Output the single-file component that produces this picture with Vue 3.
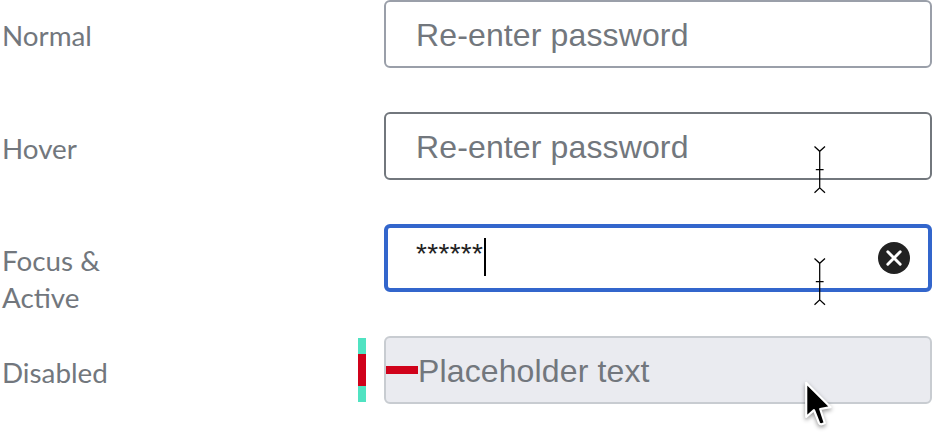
<script setup>
const rows = [
  { state: 'normal', label: ['Normal'], text: 'Re-enter password' },
  { state: 'hover', label: ['Hover'], text: 'Re-enter password', beam: true },
  { state: 'focus', label: ['Focus &', 'Active'], text: '******', beam: true },
  { state: 'disabled', label: ['Disabled'], text: 'Placeholder text' },
]
</script>

<template>
  <main class="states">
    <section v-for="row in rows" :key="row.state" class="row" :class="row.state">
      <div class="label">
        <div v-for="line in row.label" :key="line">{{ line }}</div>
      </div>
      <div class="spacer">
        <div v-if="row.state === 'disabled'" class="measure"></div>
      </div>
      <div class="field">
        <div v-if="row.state === 'disabled'" class="inset"></div>
        <span class="text">{{ row.text }}</span>
        <span v-if="row.state === 'focus'" class="caret"></span>
        <svg v-if="row.state === 'focus'" class="clear" viewBox="0 0 32 32">
          <circle cx="16" cy="16" r="16" fill="#222" />
          <path d="M9.8 9.8 22.2 22.2M22.2 9.8 9.8 22.2" stroke="#fff" stroke-width="2.9" stroke-linecap="round" />
        </svg>
        <svg v-if="row.beam" class="beam" viewBox="0 0 12 48">
          <path d="M.5 .5 5.7 5.3 11 .5M5.7 5V42M.5 46.8 5.7 41.8 11 46.8M1.8 23.5H9.6" fill="none" stroke="#000" stroke-width="1.25" />
        </svg>
        <svg v-if="row.state === 'disabled'" class="pointer" viewBox="0 0 30 50">
          <path d="M1.2 4.9V39L9 32.2 14 45Q15.5 47.6 19.8 45L15.2 31 25.6 29.2Z" fill="#000" stroke="#fff" stroke-width="2.2" stroke-linejoin="round" />
        </svg>
      </div>
    </section>
  </main>
</template>

<style>
body {
  background: #fff;
  overflow: hidden;
}
</style>

<style scoped>
.states {
  display: flex;
  flex-direction: column;
  gap: 44px;
  width: 934px;
  height: 444px;
}
.row {
  display: flex;
  flex: none;
  height: 68px;
}
.label {
  width: 340px;
  padding: 18px 0 0 2px;
  box-sizing: border-box;
  font: 27.8px/37px Lato, sans-serif;
  color: #72777d;
}
.normal .label {
  padding-top: 17px;
}
.spacer {
  width: 44px;
  padding: 2px 0 0 18px;
  box-sizing: border-box;
}
.measure {
  width: 8px;
  height: 64px;
  background: linear-gradient(#50e3c2 16px, #d0021b 16px 48px, #50e3c2 48px);
}
.field {
  position: relative;
  display: flex;
  align-items: center;
  width: 548px;
  height: 68px;
  box-sizing: border-box;
  padding-left: 30px;
  border: 2px solid #9a9fa9;
  border-radius: 6px;
  background: #fff;
}
.text {
  padding-top: 2px;
  font: 32px/38px "Liberation Sans", Arial, sans-serif;
  letter-spacing: 0.13px;
  color: #72777d;
  white-space: pre;
}
.hover .field {
  border-color: #72777d;
}
.focus .field {
  border: 4px solid #36c;
  padding-left: 28px;
}
.focus .text {
  padding: 0 0 8px;
  color: #222;
  font-size: 28px;
  letter-spacing: 0.32px;
}
.caret {
  width: 2px;
  height: 38px;
  margin: 0 0 2px 0.7px;
  background: #000;
}
.clear {
  width: 32px;
  height: 32px;
  margin: 0 18px 0 auto;
}
.beam {
  position: absolute;
  left: 428px;
  top: 32px;
  width: 12px;
  height: 48px;
}
.focus .beam {
  left: 426px;
  top: 30px;
}
.disabled .field {
  padding-left: 0;
  border-color: #c8ccd1;
  background: #eaebf0;
}
.inset {
  width: 32px;
  height: 8px;
  background: #d0021b;
}
.pointer {
  position: absolute;
  left: 419px;
  top: 40px;
  width: 30px;
  height: 50px;
  overflow: visible;
  filter: drop-shadow(0 2px 2px rgba(0, 0, 0, 0.4));
}
</style>
